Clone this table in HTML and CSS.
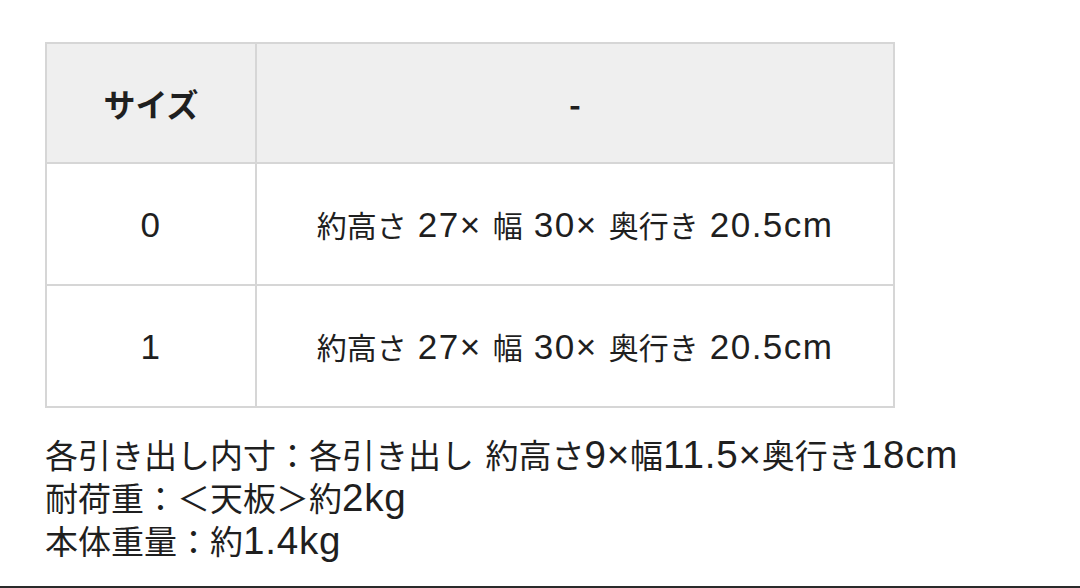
FILE: index.html
```html
<!DOCTYPE html>
<html lang="ja">
<head>
<meta charset="utf-8">
<link rel="stylesheet" href="styles.css">
</head>
<body>
<div class="page">
  <table class="spec">
    <thead>
      <tr><th class="c1">サイズ</th><th class="c2">-</th></tr>
    </thead>
    <tbody>
      <tr><td class="c1"><span class="lat">0</span></td><td class="c2">約高さ<span class="lat"> 27× </span>幅<span class="lat"> 30× </span>奥行き<span class="lat"> 20.5cm</span></td></tr>
      <tr><td class="c1"><span class="lat">1</span></td><td class="c2">約高さ<span class="lat"> 27× </span>幅<span class="lat"> 30× </span>奥行き<span class="lat"> 20.5cm</span></td></tr>
    </tbody>
  </table>
  <div class="notes">
    <p>各引き出し内寸：各引き出し<span class="lat"> </span>約高さ<span class="lat">9×</span>幅<span class="lat">11.5×</span>奥行き<span class="lat">18cm</span></p>
    <p>耐荷重：＜天板＞約<span class="lat">2kg</span></p>
    <p>本体重量：約<span class="lat">1.4kg</span></p>
  </div>
  <div class="bottom-line"></div>
</div>
</body>
</html>
```
FILE: styles.css
```css
html, body {
  margin: 0;
  padding: 0;
  background: #fff;
}
body {
  font-family: "Noto Sans CJK JP", "Noto Sans", sans-serif;
  color: #1f1f1f;
}
.page {
  height: 588px;
  display: flex;
  flex-direction: column;
  padding: 42px 0 0 45px;
  box-sizing: border-box;
}
.spec {
  width: 850px;
  border-collapse: collapse;
  border: 2px solid #d2d2d2;
  font-size: 30px;
}
.spec th, .spec td {
  border: 2px solid #d6d6d6;
  text-align: center;
  padding: 0;
  line-height: 40px;
}
.spec thead th {
  height: 118px;
  background: #efefef;
  font-weight: 700;
  font-size: 32px;
}
.spec tbody td {
  height: 120px;
  font-weight: 400;
}
.spec .c1 { width: 208px; }
.lat {
  font-family: "Liberation Sans", Arial, sans-serif;
  font-size: 1.17em;
  letter-spacing: 0.02em;
}
.spec .lat {
  letter-spacing: 0.04em;
}
.notes {
  margin-top: 25px;
  font-size: 33px;
  line-height: 42px;
}
.notes p { margin: 0; }
.bottom-line {
  margin-top: auto;
  margin-left: -45px;
  height: 2px;
  background: #2a2a2a;
}
```
